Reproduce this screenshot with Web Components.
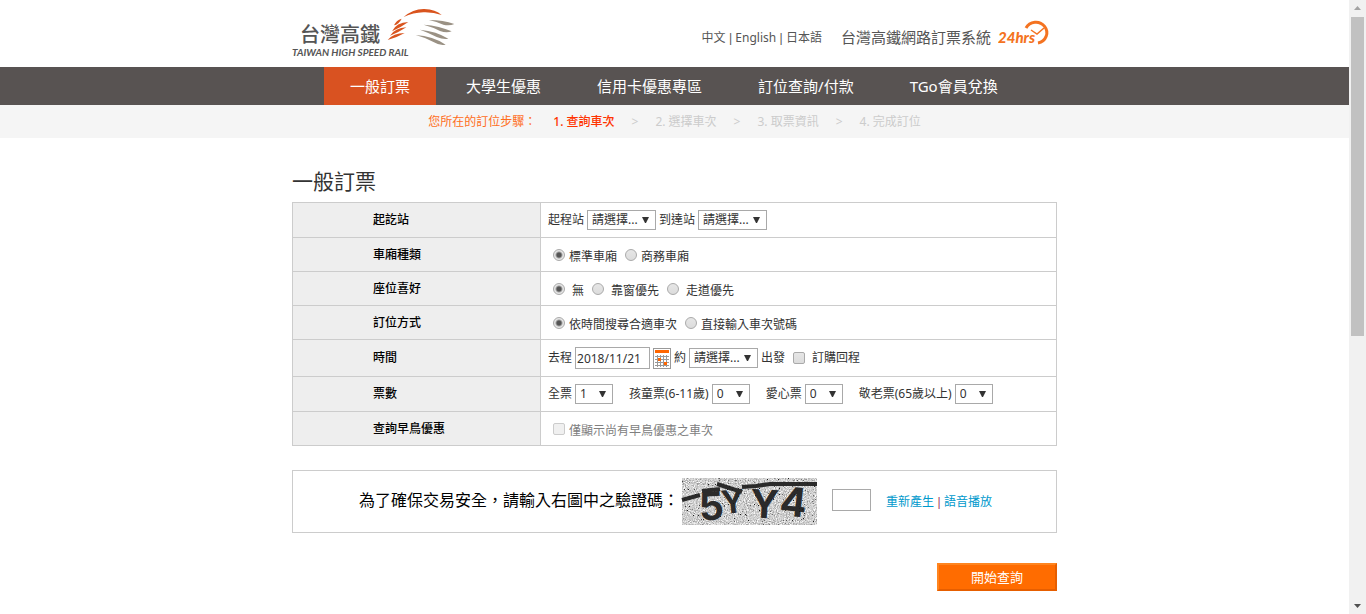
<!DOCTYPE html>
<html lang="zh-Hant">
<head>
<meta charset="utf-8">
<meta name="viewport" content="width=device-width, initial-scale=1">
<title>台灣高鐵網路訂票系統</title>
<style>
body{margin:0;background:#fff;color:#333;font:12px/16px "Noto Sans","Noto Sans CJK TC",sans-serif}
</style>
</head>
<body>
<booking-app></booking-app>

<template id="t-app">
<style>
:host{display:grid;grid-template-columns:minmax(0,1fr) 17px;min-height:100vh}
main{width:min(765px,100%);margin:0 auto}
h1{margin:28px 0 6px;font-size:21px;line-height:30px;font-weight:400;color:#333}
</style>
<div>
<site-header></site-header>
<site-nav></site-nav>
<step-trail></step-trail>
<main>
<h1>一般訂票</h1>
<booking-form></booking-form>
</main>
</div>
<scroll-rail></scroll-rail>
</template>

<template id="t-header">
<style>
:host{display:block;color:#555}
header{display:flex;align-items:center;width:min(765px,100%);height:67px;margin:0 auto}
.logo{display:block;width:164px;height:66px}
.lang{margin-left:auto;padding-top:8px}
.lang span,.lang{white-space:pre}
.lang span{font-family:"Liberation Sans",sans-serif}
a{color:inherit;text-decoration:none}
.name{margin-left:19px;padding-top:6px;font-size:15px;line-height:20px}
.all-day{display:block;width:52px;height:28px;margin:0 7px 4px 7px}
</style>
<header>
<a href="#" aria-label="台灣高鐵"><svg class="logo" viewBox="0 0 164 66">
<text x="8" y="41" font-family="'Liberation Sans','Noto Sans CJK TC',sans-serif" font-size="20" font-weight="500" fill="#555">台灣高鐵</text>
<text x="0" y="55" font-family="Lato, sans-serif" font-size="10" font-weight="700" font-style="italic" fill="#555">TAIWAN HIGH SPEED RAIL</text>
<g transform="scale(.333333) translate(-21 0)">
<g fill="#d9541e">
<path d="M356 48Q385 23 418 24 452 25 470 42 445 33 415 34 385 35 356 48Z"/>
<path d="M350 53Q333 58 327 73 341 71 350 53Z"/>
<path d="M370 63Q334 64 321 91 346 80 370 63Z"/>
<path d="M364 79Q330 81 315 104 340 95 364 79Z"/>
<path d="M359 96Q325 96 308 117 335 110 359 96Z"/>
</g>
<g fill="#9a9184">
<path d="M432 57Q475 57 508 69 493 76 475 71 455 62 432 57Z"/>
<path d="M416 71Q464 74 500 91 485 97 465 90 445 79 416 71Z"/>
<path d="M405 86Q455 91 490 113 475 116 455 108 430 95 405 86Z"/>
<path d="M392 102Q444 105 482 131 465 135 447 124 420 109 392 102Z"/>
</g></g></svg></a>
<nav class="lang" aria-label="語言"><a href="#">中文</a><span> | </span><a href="#">English</a><span> | </span><a href="#">日本語</a></nav>
<div class="name">台灣高鐵網路訂票系統</div>
<svg class="all-day" viewBox="0 0 52 28">
<text x="0" y="25" font-family="Lato, sans-serif" font-size="15" font-weight="900" font-style="italic" fill="#f47321">24hrs</text>
<g fill="none" stroke="#f47321"><path d="M28 10A11 10.500 0 1 1 40 25" stroke-width="3"/><path d="M33 12l6 4 7-6" stroke-width="1.500"/></g>
</svg>
</header>
</template>

<template id="t-nav">
<style>
:host{display:block;background:#585352}
nav{display:flex;gap:4px;width:min(765px,100%);margin:0 auto;padding-left:32px;box-sizing:border-box}
a{padding:0 26px;font-size:15px;line-height:38px;color:#fff;text-decoration:none;white-space:nowrap}
a[aria-current]{background:#d95221}
</style>
<nav aria-label="主選單">
<a href="#" aria-current="page">一般訂票</a><a href="#">大學生優惠</a><a href="#">信用卡優惠專區</a><a href="#">訂位查詢/付款</a><a href="#">TGo會員兌換</a>
</nav>
</template>

<template id="t-steps">
<style>
:host{display:block;background:#f5f5f5}
div{display:flex;justify-content:center;gap:17px;line-height:33px;color:#ccc}
.lead{color:#ff6d1a}
b{color:#f30;font-weight:500}
</style>
<div><span class="lead">您所在的訂位步驟：</span><b>1. 查詢車次</b><span>&gt;</span><span>2. 選擇車次</span><span>&gt;</span><span>3. 取票資訊</span><span>&gt;</span><span>4. 完成訂位</span></div>
</template>

<template id="t-row">
<style>
:host{display:grid;grid-template-columns:248px minmax(0,1fr);border:1px solid #ccc;border-top:0;min-height:var(--row,33px)}
:host([first]){border-top:1px solid #ccc}
.head{display:flex;align-items:center;padding-left:80px;background:#eee;border-right:1px solid #ccc;color:#000;font-weight:500}
.body{display:flex;align-items:center;flex-wrap:wrap;gap:3px;padding-left:7px}
</style>
<div class="head"></div><div class="body"><slot></slot></div>
</template>

<template id="t-form">
<style>
:host{display:block}
input,select,button{box-sizing:border-box;margin:0;font:inherit;color:#333}
select{appearance:none;width:69px;height:20px;padding:0 4px;border:1px solid #a9a9a9;border-radius:0;background:#fff url("data:image/svg+xml,%3Csvg xmlns='http://www.w3.org/2000/svg' width='7' height='6'%3E%3Cpath d='M0 0h7L4 6H3z' fill='%23333'/%3E%3C/svg%3E") no-repeat right 6px top 6px;line-height:18px}
.count{width:38px}
.next{margin-left:13px}
input[type=text]{height:22px;border:1px solid #a9a9a9;padding:0 1px;background:#fff}
.date{width:75px}
.choice{display:flex;align-items:center;gap:4px;margin-left:5px}
.wide{gap:7px}
.choice span{padding-top:4px}
.choice.level span{padding-top:0}
input[type=radio],input[type=checkbox]{appearance:none;width:12px;height:12px;border:1px solid #aaa;background:linear-gradient(#e6e6e6,#dcdcdc)}
input[type=radio]{border-radius:50%}
input[type=radio]:checked{background:radial-gradient(circle,#555 0 2px,#e6e6e6 4px)}
input[type=checkbox]{border-radius:2px}
input:disabled{border-color:#ccc;background:#f0f0f0}
.muted{color:#808080}
.cal{width:18px;height:21px;padding:0;border:1px solid #999;background:#fff}
.cal svg{display:block}
.security{display:flex;align-items:center;justify-content:center;height:61px;margin-top:24px;padding-left:2px;border:1px solid #ccc}
.security label{font-size:16px;line-height:20px;color:#000;padding-bottom:4px}
.security .code{width:39px;margin:0 15px 4px}
a{color:#09c;text-decoration:none}
.bar{font-family:"Liberation Sans",sans-serif;color:#a04060;white-space:pre}
captcha-picture{margin-left:3px}
.go{display:block;width:120px;height:28px;margin:30px 0 0 auto;padding:0;border:2px solid;border-color:#ff851f #e65e00 #e65e00 #ff851f;background:#ff6c00;color:#fff;font-size:13px;line-height:20px}
</style>
<form>
<form-row first heading="起訖站" style="--row:34px">
<label for="from">起程站</label><select id="from"><option>請選擇...</option></select>
<label for="to">到達站</label><select id="to"><option>請選擇...</option></select>
</form-row>
<form-row heading="車廂種類">
<label class="choice"><input type="radio" name="car" checked><span>標準車廂</span></label>
<label class="choice"><input type="radio" name="car"><span>商務車廂</span></label>
</form-row>
<form-row heading="座位喜好">
<label class="choice wide"><input type="radio" name="seat" checked><span>無</span></label>
<label class="choice wide"><input type="radio" name="seat"><span>靠窗優先</span></label>
<label class="choice wide"><input type="radio" name="seat"><span>走道優先</span></label>
</form-row>
<form-row heading="訂位方式">
<label class="choice"><input type="radio" name="method" checked><span>依時間搜尋合適車次</span></label>
<label class="choice"><input type="radio" name="method"><span>直接輸入車次號碼</span></label>
</form-row>
<form-row heading="時間" style="--row:36px">
<label for="date">去程</label><input class="date" id="date" type="text" value="2018/11/21">
<button class="cal" type="button" aria-label="選擇日期"><svg width="16" height="19" viewBox="0 0 16 19"><path fill="#f60" d="M1 1h14v3H1z"/><path fill="none" stroke="#999" d="M1 7.500h14M1 10.500h14M1 13.500h14M1 16.500h14M3.500 6v12M6.500 6v12M9.500 6v12M12.500 6v12"/><path fill="#f60" d="M4 9h3v3H4zM10 13h3v3h-3z"/></svg></button>
<label for="time">約</label><select id="time"><option>請選擇...</option></select>
<span>出發</span>
<label class="choice wide level"><input type="checkbox"><span>訂購回程</span></label>
</form-row>
<form-row heading="票數" style="--row:34px">
<label for="adult">全票</label><select class="count" id="adult"><option>1</option></select>
<label class="next" for="child">孩童票(6-11歲)</label><select class="count" id="child"><option>0</option></select>
<label class="next" for="care">愛心票</label><select class="count" id="care"><option>0</option></select>
<label class="next" for="senior">敬老票(65歲以上)</label><select class="count" id="senior"><option>0</option></select>
</form-row>
<form-row heading="查詢早鳥優惠">
<label class="choice muted"><input type="checkbox" disabled><span>僅顯示尚有早鳥優惠之車次</span></label>
</form-row>
<div class="security">
<label for="code">為了確保交易安全，請輸入右圖中之驗證碼：</label>
<captcha-picture></captcha-picture>
<input class="code" id="code" type="text">
<a href="#">重新產生</a><span class="bar"> | </span><a href="#">語音播放</a>
</div>
<button class="go" type="button">開始查詢</button>
</form>
</template>

<template id="t-captcha">
<style>:host{display:block}svg{display:block;overflow:visible}</style>
<svg width="135" height="47" viewBox="0 0 135 47">
<defs>
<filter id="grain" x="0" y="0" width="100%" height="100%" color-interpolation-filters="sRGB"><feTurbulence type="fractalNoise" baseFrequency=".9" numOctaves="2" seed="4"/><feColorMatrix values=".7 0 0 0 .46 .7 0 0 0 .46 .7 0 0 0 .46 0 0 0 0 1"/></filter>
<filter id="specks" x="0" y="0" width="100%" height="100%" color-interpolation-filters="sRGB"><feTurbulence type="fractalNoise" baseFrequency=".8" numOctaves="2" seed="11"/><feColorMatrix values="0 0 0 0 .1 0 0 0 0 .1 0 0 0 0 .1 0 10 0 0 -7"/></filter>
</defs>
<rect width="135" height="47" filter="url(#grain)"/>
<g fill="#2b2b2b" font-family="Inter, sans-serif" font-weight="700">
<text x="17" y="42" font-size="39" transform="rotate(-4 28 30)">5</text>
<text x="39" y="35" font-size="32" transform="rotate(-5 50 25)">Y</text>
<text x="68" y="40" font-size="39" transform="rotate(3 80 28)">Y</text>
<text x="98" y="38" font-size="40" transform="rotate(6 110 24)">4</text>
</g>
<path d="M0 22L18 17M20 13L38 11M35 6L60 14M60 9L74 8 88 6H135" fill="none" stroke="#2b2b2b" stroke-width="4"/>
<rect width="135" height="47" filter="url(#specks)"/>
</svg>
</template>

<template id="t-scroll">
<style>
:host{position:sticky;top:0;display:grid;grid-template-rows:17px 1fr 17px;height:100vh;background:#f1f1f1}
svg{display:block}
.track{padding:0 2px}
.thumb{height:55%;background:#c1c1c1}
</style>
<svg width="17" height="17"><path d="M5 10h7L8.500 6z" fill="#a3a3a3"/></svg>
<div class="track"><div class="thumb"></div></div>
<svg width="17" height="17"><path d="M5 7h7l-3.500 4z" fill="#505050"/></svg>
</template>

<script>
class TemplateElement extends HTMLElement {
  constructor() {
    super();
    this.attachShadow({ mode: "open" }).append(
      document.getElementById(this.constructor.template).content.cloneNode(true));
  }
}
const define = (name, template) =>
  customElements.define(name, class extends TemplateElement { static template = template; });

class FormRow extends TemplateElement {
  static template = "t-row";
  connectedCallback() {
    const heading = this.getAttribute("heading");
    this.shadowRoot.querySelector(".head").textContent = heading;
    this.setAttribute("role", "group");
    this.setAttribute("aria-label", heading);
  }
}
customElements.define("form-row", FormRow);
define("captcha-picture", "t-captcha");
define("booking-form", "t-form");
define("site-header", "t-header");
define("site-nav", "t-nav");
define("step-trail", "t-steps");
define("scroll-rail", "t-scroll");
define("booking-app", "t-app");
</script>
</body>
</html>
